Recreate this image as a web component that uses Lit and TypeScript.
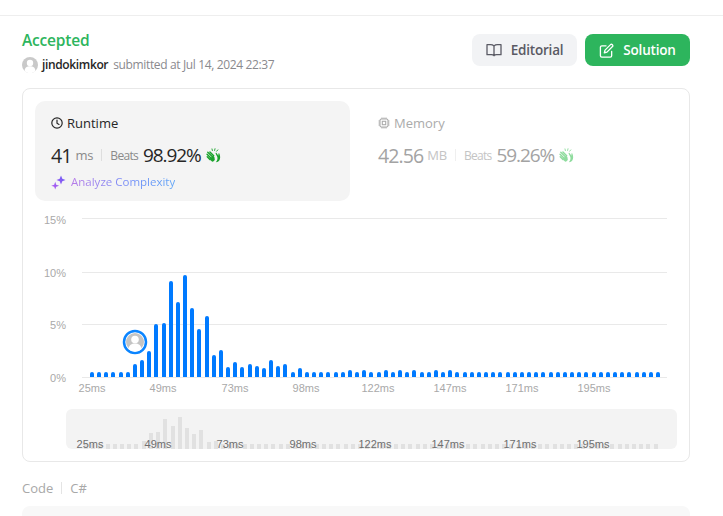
import { LitElement, css, html, svg } from "lit";
import { customElement } from "lit/decorators.js";

// bar heights in px, read off the histogram (80 buckets)
const heights = [
  5, 5, 5, 5, 5, 5, 13, 17, 26, 53, 54, 96, 75, 102, 69, 48, 61, 22, 27, 10,
  15, 10, 13, 11, 9, 17, 11, 13, 5, 9, 5, 5, 5, 5, 5, 5, 7, 5, 7, 5,
  5, 7, 5, 7, 5, 7, 5, 5, 7, 5, 7, 5, 5, 5, 5, 5, 5, 5, 5, 5,
  5, 5, 5, 5, 5, 5, 5, 5, 5, 5, 5, 5, 5, 5, 5, 5, 5, 5, 5, 5,
];

const yTicks = [
  { label: "15%", y: 218, ty: 224 },
  { label: "10%", y: 272, ty: 277 },
  { label: "5%", y: 324, ty: 329 },
  { label: "0%", y: 377, ty: 382 },
];

const xTicks = [
  { label: "25ms", x: 92, bx: 90 },
  { label: "49ms", x: 163, bx: 158 },
  { label: "73ms", x: 235, bx: 230 },
  { label: "98ms", x: 306, bx: 303 },
  { label: "122ms", x: 378, bx: 375 },
  { label: "147ms", x: 450, bx: 448 },
  { label: "171ms", x: 522, bx: 520 },
  { label: "195ms", x: 594, bx: 593 },
];

const barPath = (x: number, bottom: number, w: number, h: number) => {
  const r = w / 2;
  return `M${x} ${bottom}V${bottom - h + r}A${r} ${r} 0 0 1 ${x + w} ${bottom - h + r}V${bottom}Z`;
};

const clap = (color: string) => html`
  <svg class="clap" viewBox="0 0 16 16" fill="none" stroke=${color} stroke-linecap="round">
    <path stroke-width="1" d="M6.800 2.700 6.400 1M9.200 2.600 9.600 .8M11.400 3.400 12.600 2" />
    <path stroke-width="1.500" d="M1.100 6.600 5.200 10.700M1.900 4.500 6.800 9.300M4.200 4.300 8.200 8.200M1.300 9.400 4.400 12.400" />
    <path fill=${color} stroke="none" d="M4 11.400 7.800 8l1.300 2 .3 2.800-2 1.900c-1.400-.4-2.500-1.400-3.400-3.300Z" />
    <path fill=${color} stroke="none" d="M10.900 15.200c2.700-.4 4.300-2.600 4.200-5.400 0-1.400-.3-2.600-.8-3.700-.3-.7-1.200-.4-1.100.4l.1 1.800-2.100-2.900c-.4-.6-1.200 0-.9.600l1.700 3.400c.6 1.700.2 3.700-1 5.100-.3.300-.1.700-.1.700Z" />
  </svg>
`;

@customElement("app-root")
export class AppRoot extends LitElement {
  static styles = css`
    :host {
      display: block;
      height: 516px;
      overflow: hidden;
      background: #fff;
      font-family: "Open Sans", "Noto Sans", sans-serif;
    }

    .topbar {
      height: 15px;
      border-bottom: 1px solid #eeeeee;
    }

    .content {
      width: 668px;
      margin-left: 22px;
    }

    .header {
      display: flex;
      justify-content: space-between;
      height: 72px;
    }

    .status {
      margin-top: 13px;
      font-size: 15.5px;
      line-height: 22px;
      font-weight: 600;
      letter-spacing: -0.2px;
      color: #2db55d;
    }

    .submitted {
      display: flex;
      align-items: center;
      margin-top: 6px;
      font-size: 12px;
      line-height: 16px;
      letter-spacing: -0.36px;
      color: #8a8a8e;
    }

    .submitted b {
      margin: 0 5px 0 4px;
      font-weight: 600;
      color: #262626;
    }

    .actions {
      display: flex;
      gap: 8px;
      margin-top: 18px;
    }

    .btn {
      display: flex;
      align-items: center;
      justify-content: center;
      gap: 9px;
      width: 105px;
      height: 32px;
      border-radius: 8px;
      font-size: 13.5px;
      letter-spacing: -0.2px;
      font-weight: 600;
    }

    .btn svg {
      width: 16px;
      height: 16px;
    }

    .btn.editorial {
      background: #f2f3f5;
      color: #5a5a64;
    }

    .btn.solution {
      background: #2db55d;
      color: #fff;
    }

    .solution svg {
      width: 15px;
      height: 15px;
    }

    .card {
      box-sizing: border-box;
      height: 374px;
      padding: 12px 12px 12px;
      border: 1px solid #e8e8e8;
      border-radius: 8px;
    }

    .stats {
      display: flex;
      height: 100px;
    }

    .stat {
      box-sizing: border-box;
      width: 315px;
      padding: 13px 16px;
      border-radius: 10px;
    }

    .stat.active {
      background: #f4f4f4;
    }

    .stat.dim {
      margin-left: 12px;
      color: #a8a8a8;
    }

    .stat-title {
      display: flex;
      align-items: center;
      gap: 4px;
      font-size: 13px;
      line-height: 18px;
      color: #262626;
    }

    .dim .stat-title {
      color: #ababab;
    }

    .stat-title svg {
      width: 12px;
      height: 12px;
    }

    .values {
      display: flex;
      align-items: center;
      margin-top: 10px;
      height: 26px;
      color: #262626;
    }

    .dim .values {
      color: #a3a3a3;
    }

    .big {
      font-size: 19.5px;
      letter-spacing: -0.9px;
      font-weight: 500;
    }

    .unit {
      margin-left: 4px;
      font-size: 13px;
      letter-spacing: -0.2px;
      color: #8a8a8a;
    }

    .dim .unit,
    .dim .beats {
      color: #c4c4c4;
    }

    .sep {
      width: 1px;
      height: 12px;
      margin: 0 8px 0 8px;
      background: #dedede;
    }

    .dim .sep {
      background: #efefef;
    }

    .beats {
      font-size: 12px;
      letter-spacing: -0.7px;
      color: #8a8a8a;
    }

    .big.pct {
      margin-left: 5px;
      font-size: 19px;
      letter-spacing: -1.1px;
      font-weight: 400;
    }

    .clap {
      width: 15px;
      height: 15px;
      margin-left: 5px;
    }

    .analyze {
      display: flex;
      align-items: center;
      gap: 5px;
      margin-top: 6px;
      font-size: 11.5px;
      line-height: 16px;
    }

    .analyze svg {
      width: 15px;
      height: 15px;
    }

    .analyze span {
      background: linear-gradient(90deg, #b77ae8, #6f8ff8 60%, #5fa5f7);
      -webkit-background-clip: text;
      background-clip: text;
      color: transparent;
    }

    .chart {
      display: block;
      width: 642px;
      height: 248px;
    }

    .chart text {
      font-family: "Liberation Sans", Arial, sans-serif;
      font-size: 11px;
    }

    .axis-label {
      fill: #a9a9a9;
    }

    .brush-label {
      fill: #6e6e6e;
    }

    .code-row {
      display: flex;
      align-items: center;
      height: 20px;
      margin-top: 16px;
      font-size: 13px;
      color: #a8a8a8;
    }

    .code-row i {
      width: 1px;
      height: 12px;
      margin: 0 8px;
      background: #e4e4e4;
    }

    .code {
      height: 40px;
      margin-top: 8px;
      border-radius: 8px;
      background: #f8f8f8;
    }
  `;

  renderChart() {
    return html`
      <svg class="chart" viewBox="35 201 642 248">
        ${yTicks.map(
          (t) => svg`
            <line x1="82" x2="667" y1=${t.y + 0.5} y2=${t.y + 0.5} stroke="#e9e9e9" />
            <text class="axis-label" x="66" y=${t.ty} text-anchor="end">${t.label}</text>
          `
        )}
        ${heights.map(
          (h, i) => svg`<path fill="#007aff" d=${barPath(Math.round(90 + i * 7.165), 377, 4, h)} />`
        )}
        ${xTicks.map(
          (t) => svg`<text class="axis-label" x=${t.x} y="392" text-anchor="middle">${t.label}</text>`
        )}

        <circle cx="135" cy="342" r="11" fill="#fff" stroke="#0a84ff" stroke-width="2.500" />
        <circle cx="135" cy="342" r="9" fill="#c4c4c4" />
        <circle cx="135" cy="339.500" r="3.800" fill="#fff" />
        <path fill="#fff" d="M128.500 349c.5-4 3-5.500 6.500-5.500s6 1.500 6.500 5.500a9 9 0 0 1-13 0Z" />

        <rect x="66" y="409" width="611" height="40" rx="6" fill="#f3f3f3" />
        ${heights.map((h, i) => {
          const bh = Math.max(5, Math.round(h * 0.31));
          return svg`<rect x=${Math.round(84 + i * 7.21)} y=${449 - bh} width="4" height=${bh} fill="#e1e1e1" />`;
        })}
        ${xTicks.map(
          (t) => svg`<text class="brush-label" x=${t.bx} y="448" text-anchor="middle">${t.label}</text>`
        )}
      </svg>
    `;
  }

  render() {
    return html`
      <div class="topbar"></div>
      <div class="content">
        <div class="header">
          <div>
            <div class="status">Accepted</div>
            <div class="submitted">
              <svg width="16" height="16" viewBox="0 0 16 16">
                <circle cx="8" cy="8" r="8" fill="#c9c9c9" />
                <circle cx="8" cy="6" r="3.200" fill="#fff" />
                <path fill="#fff" d="M2.500 14c.4-3.800 2.500-4.800 5.500-4.800s5.100 1 5.500 4.800a8 8 0 0 1-11 0Z" />
              </svg>
              <b>jindokimkor</b> submitted at Jul 14, 2024 22:37
            </div>
          </div>
          <div class="actions">
            <div class="btn editorial">
              <svg viewBox="0 0 16 16" fill="none" stroke="currentColor" stroke-width="1.300" stroke-linejoin="round">
                <path d="M8 4c-1-1-2.300-1.300-3.500-1.300H1v10h4.500c1 0 1.900.3 2.500 1 .6-.7 1.500-1 2.500-1H15v-10h-3.500C10.300 2.700 9 3 8 4Zm0 0v9.600" />
              </svg>
              Editorial
            </div>
            <div class="btn solution">
              <svg viewBox="0 0 16 16" fill="none" stroke="currentColor" stroke-width="1.400" stroke-linecap="round" stroke-linejoin="round">
                <path d="M7.500 3H3a1.500 1.500 0 0 0-1.500 1.500v9A1.500 1.500 0 0 0 3 15h9a1.500 1.500 0 0 0 1.500-1.500V9" />
                <path d="M12.300 1.700a1.500 1.500 0 0 1 2.100 2.100L8.500 9.700l-2.800.7.700-2.800Z" />
              </svg>
              Solution
            </div>
          </div>
        </div>

        <div class="card">
          <div class="stats">
            <div class="stat active">
              <div class="stat-title">
                <svg viewBox="0 0 12 12" fill="none" stroke="#262626" stroke-width="1.200" stroke-linecap="round">
                  <circle cx="6" cy="6" r="5.200" />
                  <path d="M6 3v3.200l2 1.200" />
                </svg>
                Runtime
              </div>
              <div class="values">
                <span class="big">41</span>
                <span class="unit">ms</span>
                <span class="sep"></span>
                <span class="beats">Beats</span>
                <span class="big pct">98.92%</span>
                ${clap("#1aa32c")}
              </div>
              <div class="analyze">
                <svg viewBox="0 0 15 15">
                  <defs>
                    <linearGradient id="spark" x1="0" y1="1" x2="1" y2="0">
                      <stop offset="0" stop-color="#b65cf0" />
                      <stop offset="1" stop-color="#6a5cf5" />
                    </linearGradient>
                  </defs>
                  <path fill="url(#spark)" d="M10 .5l1.300 3.200 3.200 1.300-3.200 1.300L10 9.500 8.700 6.300 5.500 5l3.200-1.300ZM4.200 6.800l1 2.900 2.900 1-2.900 1-1 2.900-1-2.900-2.900-1 2.900-1Z" />
                </svg>
                <span>Analyze Complexity</span>
              </div>
            </div>
            <div class="stat dim">
              <div class="stat-title">
                <svg viewBox="0 0 12 12" fill="none" stroke="#ababab" stroke-width="1.100">
                  <rect x="2" y="2" width="8" height="8" rx="1.500" />
                  <rect x="4.300" y="4.300" width="3.400" height="3.400" />
                  <path d="M4 .5V2M6 .5V2M8 .5V2M4 10v1.500M6 10v1.500M8 10v1.500M.5 4H2M.5 6H2M.5 8H2M10 4h1.500M10 6h1.500M10 8h1.500" />
                </svg>
                Memory
              </div>
              <div class="values">
                <span class="big">42.56</span>
                <span class="unit">MB</span>
                <span class="sep"></span>
                <span class="beats">Beats</span>
                <span class="big pct">59.26%</span>
                ${clap("#8fdc9e")}
              </div>
            </div>
          </div>
          ${this.renderChart()}
        </div>

        <div class="code-row">Code<i></i>C#</div>
        <div class="code"></div>
      </div>
    `;
  }
}
